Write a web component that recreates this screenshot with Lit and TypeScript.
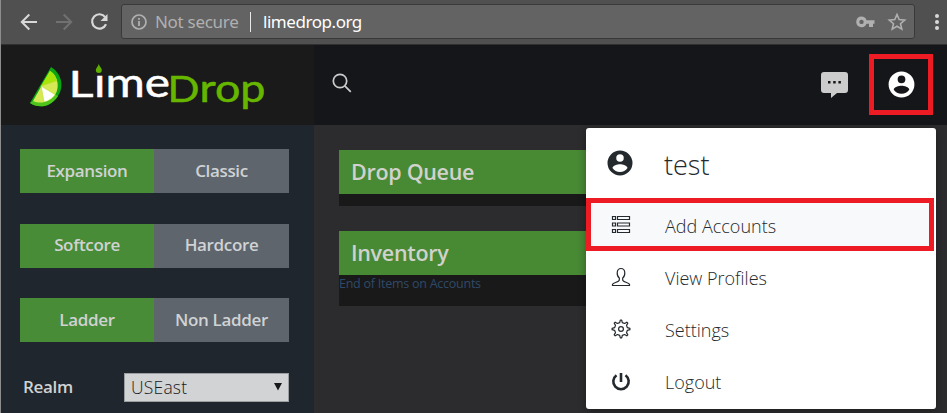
import { LitElement, html, css, svg } from "lit";
import { customElement, property } from "lit/decorators.js";

const account = svg`<path fill-rule="evenodd" d="M12 2a10 10 0 1 0 0 20 10 10 0 0 0 0-20zm0 3a3 3 0 1 1 0 6 3 3 0 0 1 0-6zm0 14.2a7.2 7.2 0 0 1-6-3.2c.03-2 4-3.1 6-3.1s5.97 1.1 6 3.1a7.2 7.2 0 0 1-6 3.2z"/>`;

@customElement("toggle-pair")
export class TogglePair extends LitElement {
  @property() on = "";
  @property() off = "";
  static styles = css`
    :host { display: grid; grid-template-columns: 134px 135px; height: 44px; font-weight: 600; font-size: 17px; color: #d0d2d3; }
    button { all: unset; box-sizing: border-box; display: flex; align-items: center; justify-content: center; background: #5e656d; letter-spacing: -0.35px; white-space: nowrap; padding-bottom: 2px; }
    .active { background: #488c38; }
  `;
  render() {
    return html`<button class="active">${this.on}</button><button>${this.off}</button>`;
  }
}

@customElement("app-root")
export class AppRoot extends LitElement {
  static styles = css`
    :host { display: block; width: 947px; height: 413px; overflow: hidden; position: relative; font-family: "Open Sans", "Noto Sans", sans-serif; background: #2c2c2e; }
    * { box-sizing: border-box; }
    svg { display: block; flex: none; fill: currentColor; overflow: visible; }
    .page { height: 413px; border-left: 1px solid #8d8d8d; display: flex; flex-direction: column; }
    .browser { height: 45px; flex: none; background: #505050; border-bottom: 1px solid #303030; display: flex; align-items: center; color: #d8d8d8; }
    .back { margin-left: 18px; }
    .forward { margin-left: 15px; color: #717171; }
    .reload { margin-left: 15px; }
    .address { margin-left: 12px; width: 794px; height: 35px; border: 1px solid #393939; border-radius: 3px; background: #636363; display: flex; align-items: center; padding-left: 9px; color: #b0b0b0; font: 17px "Noto Sans", sans-serif; margin-bottom: 1px; }
    .insecure { margin-left: 8px; width: 84px; letter-spacing: -0.3px; white-space: nowrap; }
    .bar { width: 1px; height: 20px; background: #e8e8e8; margin: 0 12px 0 11px; }
    .url { color: #fff; flex: 1; letter-spacing: -0.45px; }
    .key { margin-right: 12px; }
    .star { margin-right: 7px; }
    .more { margin-left: 20px; }
    .header { height: 80px; flex: none; display: flex; background: #15161a; }
    .brand { width: 313px; background: #1a1a1a; padding: 16px 0 0 28px; }
    .tools { flex: 1; display: flex; align-items: center; color: #ccc; padding-left: 18px; }
    .search { margin-bottom: 4px; }
    .chat { margin-left: auto; }
    .account { border: 5px solid #ed1c24; width: 64px; height: 61px; margin: 0 14px 2px 21px; color: #fff; display: flex; align-items: center; justify-content: center; padding-left: 1px; }
    .body { flex: 1; display: flex; }
    .side { width: 313px; background: #20262d; padding: 24px 0 0 19px; display: flex; flex-direction: column; gap: 30.5px; color: #d0d2d3; }
    .realm { display: flex; align-items: center; width: 269px; padding-left: 3px; font-size: 17px; }
    .realm b { font-weight: 600; width: 101px; letter-spacing: -0.3px; padding-bottom: 2px; }
    .select { width: 165px; height: 29px; background: #d2d3d5; border: 1px solid #9aa0a2; color: #17191b; font-size: 17.5px; display: flex; align-items: center; justify-content: space-between; padding: 0 6px; font-weight: 300; letter-spacing: 0.2px; line-height: 24px; }
    .content { padding: 25px 0 0 25px; display: flex; flex-direction: column; gap: 25px; }
    .panel { width: 560px; background: #191919; height: 56px; }
    .panel.tall { height: 75px; }
    h2 { margin: 0; height: 44px; background: #488934; padding-left: 12px; font-size: 21.5px; line-height: 44px; font-weight: 600; color: #d0d2ce; letter-spacing: -0.3px; }
    .end { color: #2f4a68; font-size: 12.5px; line-height: 17px; letter-spacing: -0.25px; }
    .menu { position: absolute; left: 586px; top: 128px; width: 350px; height: 281px; background: #fff; border-radius: 3px; box-shadow: 0 2px 8px #0005; color: #24292e; }
    .user { height: 70px; display: flex; align-items: center; font-size: 27px; font-weight: 300; padding: 2px 0 0 19px; gap: 29px; }
    .user span { padding-top: 1px; }
    .user svg { margin-bottom: 2px; }
    .item { height: 52px; display: flex; align-items: center; padding-left: 24px; gap: 33px; font-size: 18px; font-weight: 300; letter-spacing: 0; }
    .item.current { width: 348px; height: 53px; border: 5px solid #ed1c24; background: #f8f9fb; padding-left: 19px; }
    .item span { padding-top: 2px; }
    .item svg { width: 22px; height: 22px; }
  `;

  render() {
    const item = (label: string, icon: unknown, current = false) => html`
      <div class=${current ? "item current" : "item"}><svg viewBox="0 0 22 22">${icon}</svg><span>${label}</span></div>`;
    return html`
      <div class="page">
        <div class="browser">
          <svg class="back" width="20" height="20"><path d="M18 10H3M10.3 2.5 2.8 10l7.5 7.5" fill="none" stroke="currentColor" stroke-width="2"/></svg>
          <svg class="forward" width="20" height="20"><path d="M2 10h15M9.7 2.5l7.5 7.5-7.5 7.5" fill="none" stroke="currentColor" stroke-width="2"/></svg>
          <svg class="reload" width="20" height="20"><path d="M16.2 5.2A7.2 7.2 0 1 0 17 12.3" fill="none" stroke="currentColor" stroke-width="2.2"/><path d="M18.5 2v7h-7z"/></svg>
          <div class="address">
            <svg width="16" height="16"><circle cx="8" cy="8" r="7" fill="none" stroke="currentColor" stroke-width="1.7"/><path d="M7.1 7h1.8v5H7.1zM7.1 4h1.8v1.8H7.1z"/></svg>
            <span class="insecure">Not secure</span><span class="bar"></span><span class="url">limedrop.org</span>
            <svg class="key" width="19" height="12"><path fill-rule="evenodd" d="M5.5.5a5.3 5.3 0 1 0 5 7.2H13V11h4V7.7h1.5V4.2h-8A5.3 5.3 0 0 0 5.5.5zm0 3.2a2.2 2.2 0 1 1 0 4.4 2.2 2.2 0 0 1 0-4.4z"/></svg>
            <svg class="star" width="20" height="20"><path d="m10 2.5 2.2 5.1 5.500.5-4.200 3.600 1.300 5.400-4.800-2.900-4.800 2.900 1.300-5.400-4.200-3.600 5.500-.5z" fill="none" stroke="currentColor" stroke-width="1.6"/></svg>
          </div>
          <svg class="more" width="4" height="18" viewBox="0 0 4 18"><circle cx="2" cy="3" r="2"/><circle cx="2" cy="9" r="2"/><circle cx="2" cy="15" r="2"/></svg>
        </div>
        <div class="header">
          <div class="brand">
            <svg width="240" height="54" viewBox="0 0 240 54">
              <path d="M22 6C32 12 36 25 29 35 22 46 10 48 1 42z" fill="#0ba514"/>
              <path d="M1 42c9 6 21 4 28-7l-3-1.5L4 40z" fill="#4fc51b"/>
              <path d="M21 10C29 15 31 26 26 34 20 42 11 43 4 40z" fill="#d5e956"/>
              <path d="m21 10-9 15 16-5C27 16 25 12 21 10z" fill="#a7e60b"/>
              <path d="m12 25 3 15.500q6-1 11-7z" fill="#fff"/>
              <path d="m12 25 16-5M12 25l14 8.500M12 25l3 15.500" stroke="#c3de38" stroke-width=".7"/>
              <g font-family="Lato" stroke-width=".5">
                <text x="39.500" y="35.500" font-size="37" textLength="25" lengthAdjust="spacingAndGlyphs" fill="#fff" stroke="#fff">L</text>
                <text x="65" y="35.500" font-size="41" textLength="76" lengthAdjust="spacingAndGlyphs" fill="#fff" stroke="#fff">ıme</text>
                <text x="138.500" y="41" font-size="37" textLength="32" lengthAdjust="spacingAndGlyphs" fill="#66b600" stroke="#66b600">D</text>
                <text x="170.500" y="41" font-size="38" textLength="66" lengthAdjust="spacingAndGlyphs" fill="#66b600" stroke="#66b600">rop</text>
              </g>
              <path d="M69.800 3c1 3 3 4 3 6a3 3 0 0 1-6 0c0-2 2-3 3-6z" fill="#5eaf00"/>
            </svg>
          </div>
          <div class="tools">
            <svg class="search" width="20" height="20"><g fill="none" stroke="currentColor" stroke-width="1.700"><circle cx="8" cy="8" r="6.700"/><path d="m12.800 12.800 6 6"/></g></svg>
            <svg class="chat" width="27" height="26"><path fill-rule="evenodd" d="M3 0h21q3 0 3 3v15q0 3-3 3h-8l-6 5v-5H3q-3 0-3-3V3q0-3 3-3zm4 9v2.500h2.500V9zm5.200 0v2.500h2.500V9zm5.200 0v2.500h2.500V9z"/></svg>
            <div class="account"><svg width="31" height="31" viewBox="0 0 24 24">${account}</svg></div>
          </div>
        </div>
        <div class="body">
          <div class="side">
            <toggle-pair on="Expansion" off="Classic"></toggle-pair>
            <toggle-pair on="Softcore" off="Hardcore"></toggle-pair>
            <toggle-pair on="Ladder" off="Non Ladder"></toggle-pair>
            <div class="realm"><b>Realm</b><div class="select">USEast<svg width="8" height="8"><path d="M0 0h8L4 7.500z"/></svg></div></div>
          </div>
          <div class="content">
            <div class="panel"><h2>Drop Queue</h2></div>
            <div class="panel tall"><h2>Inventory</h2><div class="end">End of Items on Accounts</div></div>
          </div>
        </div>
      </div>
      <div class="menu">
        <div class="user"><svg width="30" height="30" viewBox="0 0 24 24">${account}</svg><span>test</span></div>
        ${item("Add Accounts", svg`<g fill="none" stroke="currentColor" stroke-width="1.200"><path d="M2.500 2.500h3v3h-3zM7.500 2.500h12v3h-12zM2.500 9h3v3h-3zM7.500 9h12v3h-12zM2.500 15.500h3v3h-3zM7.500 15.500h12v3h-12z"/></g>`, true)}
        ${item("View Profiles", svg`<path fill="none" stroke="currentColor" stroke-width="1.200" d="M2.500 19.500v-1.200c1-2.200 6.800-2 6.800-4.300v-2C6.500 10 6 2.500 11 2.500S15.500 10 12.700 12v2c0 2.300 5.800 2.100 6.800 4.300v1.200z"/>`)}
        ${item("Settings", svg`<g fill="none" stroke="currentColor" stroke-width="1.200"><circle cx="11" cy="11" r="2.400"/><path stroke-linejoin="round" d="m9.700 4.600.6-2.500h1.400l.6 2.500 2.300.9 2.200-1.300 1 1-1.300 2.200.9 2.300 2.500.6v1.400l-2.500.6-.9 2.300 1.300 2.200-1 1-2.200-1.300-2.300.9-.6 2.500h-1.400l-.6-2.500-2.300-.9-2.200 1.300-1-1 1.300-2.200-.9-2.300-2.500-.6v-1.400l2.500-.6.9-2.300-1.300-2.200 1-1 2.200 1.300z"/></g>`)}
        ${item("Logout", svg`<g fill="none" stroke="currentColor" stroke-width="2.600"><path d="M6.500 5.300a7.700 7.700 0 1 0 9 0M11 3v9"/></g>`)}
      </div>`;
  }
}
